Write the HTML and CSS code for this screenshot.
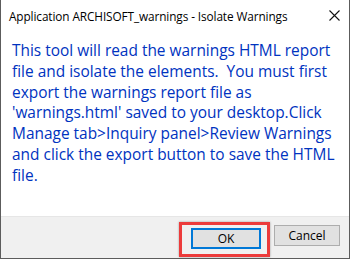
FILE: index.html
```html
<!DOCTYPE html>
<html>
<head>
<meta charset="utf-8">
<link rel="stylesheet" href="styles.css">
</head>
<body>
<div class="window">
  <div class="titlebar">
    <span class="title">Application ARCHISOFT_warnings - Isolate Warnings</span>
    <svg class="close" width="11" height="11" viewBox="0 0 11 11"><path d="M0.5 0.5L10.5 10.5M10.5 0.5L0.5 10.5" stroke="#111" stroke-width="1.1" fill="none"/></svg>
  </div>
  <div class="content">
    <p class="message">This tool will read the warnings HTML report<br>file and isolate the elements.&nbsp; You must first<br>export the warnings report file as<br>'warnings.html' saved to your desktop.Click<br>Manage tab&gt;Inquiry panel&gt;Review Warnings<br>and click the export button to save the HTML<br>file.</p>
  </div>
  <div class="footer">
    <div class="highlight"><button class="btn btn-default">OK</button></div>
    <button class="btn">Cancel</button>
  </div>
</div>
</body>
</html>
```
FILE: styles.css
```css
html, body {
  margin: 0;
  padding: 0;
  background: #ffffff;
}
.window {
  width: 348px;
  height: 258px;
  border: 1px solid #5c5c5c;
  border-top: none;
  display: flex;
  flex-direction: column;
  background: #ffffff;
  font-family: "Open Sans", "Noto Sans", sans-serif;
}
.titlebar {
  height: 31px;
  display: flex;
  align-items: center;
  justify-content: space-between;
  padding: 0 9px 0 8px;
  box-sizing: border-box;
}
.title {
  font-size: 11.8px;
  color: #000;
  letter-spacing: -0.1px;
}
.close {
  display: block;
  margin-top: -1px;
}
.content {
  flex: 1;
  padding: 0 0 0 11px;
}
.message {
  margin: 9px 0 0 0;
  font-size: 15.45px;
  line-height: 20.8px;
  color: #0033c0;
  white-space: nowrap;
}
.footer {
  height: 41px;
  background: #f0f0f0;
  border-top: 1px solid #e6e6e6;
  display: flex;
  align-items: center;
  justify-content: flex-end;
  gap: 4px;
  padding-right: 9px;
}
.highlight {
  border: 3px solid #ec3b3b;
  padding: 3px 6px 5px 9px;
  box-shadow: 0 0 2px rgba(0,0,0,0.35);
  margin-top: 4px;
}
.btn {
  display: block;
  width: 66px;
  height: 21px;
  background: #e1e1e1;
  border: 1px solid #adadad;
  font-family: "Open Sans", "Noto Sans", sans-serif;
  font-size: 12px;
  color: #000;
  padding: 0;
  margin: 0;
}
.btn-default {
  width: 70px;
  border: 2px solid #0078d7;
}
.footer > .btn {
  margin-top: -5px;
}
```
